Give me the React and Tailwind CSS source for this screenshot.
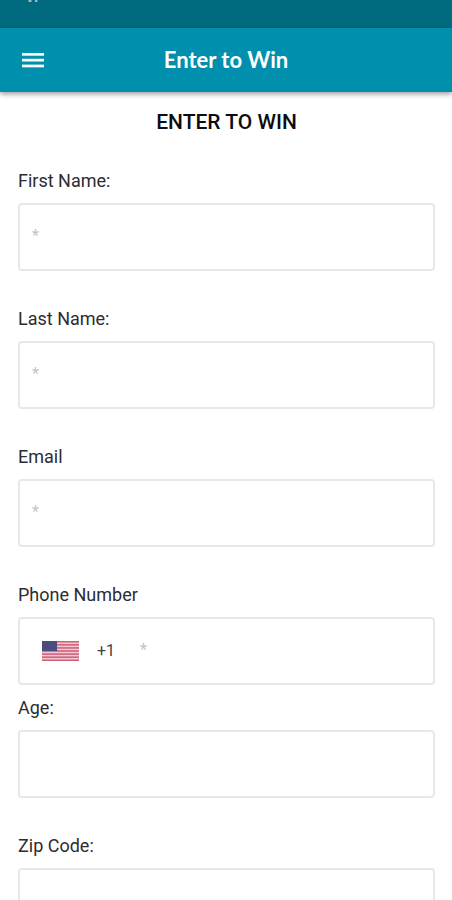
import { useState } from "react";

const BOX = "h-[68px] rounded border-2 border-[#e8e8e8] bg-white";
const INPUT_TEXT = "pb-1 text-base text-[#222] placeholder:text-[#c4c4c4] outline-none";
const LABEL = "text-lg/6";

function StatusMarks() {
  return (
    <svg viewBox="0 0 12 3" className="ml-7 h-[3px] w-3" fill="#a9b4b8" aria-hidden="true">
      <rect x="0.5" y="0" width="3" height="2" />
      <rect x="7" y="0" width="2.4" height="2" />
    </svg>
  );
}

function MenuIcon() {
  return (
    <svg viewBox="0 0 22 16" className="h-4 w-[22px]" fill="white" aria-hidden="true">
      <rect x="0" y="1" width="22" height="2.7" />
      <rect x="0" y="6.8" width="22" height="2.7" />
      <rect x="0" y="12.6" width="22" height="2.7" />
    </svg>
  );
}

function UsFlag() {
  return (
    <svg viewBox="0 0 37 20" className="h-5 w-[37px]" aria-hidden="true">
      <rect width="37" height="20" fill="#f1c9cf" />
      {[0, 1, 2, 3, 4, 5, 6].map((i) => (
        <rect key={i} x="0" y={i * 3.08} width="37" height="1.54" fill="#d0607a" />
      ))}
      <rect width="15" height="10" fill="#4b4b82" />
    </svg>
  );
}

function Field({ id, label, placeholder, type = "text" }) {
  const [value, setValue] = useState("");

  return (
    <div className="flex flex-col gap-[10px]">
      <label htmlFor={id} className={LABEL}>
        {label}
      </label>
      <input
        id={id}
        type={type}
        value={value}
        placeholder={placeholder}
        onChange={(e) => setValue(e.target.value)}
        className={`${BOX} ${INPUT_TEXT} w-full px-3`}
      />
    </div>
  );
}

function PhoneField() {
  const [value, setValue] = useState("");

  return (
    <div className="flex flex-col gap-[10px]">
      <label htmlFor="phone" className={LABEL}>
        Phone Number
      </label>
      <div className={`${BOX} flex items-center pl-[22px] pr-3`}>
        <button type="button" aria-label="Country code" className="flex items-center gap-[18px]">
          <UsFlag />
          <span className="text-base text-[#444]">+1</span>
        </button>
        <input
          id="phone"
          type="tel"
          value={value}
          placeholder="*"
          onChange={(e) => setValue(e.target.value)}
          className={`${INPUT_TEXT} ml-[25px] h-full min-w-0 flex-1`}
        />
      </div>
    </div>
  );
}

export default function App() {
  return (
    <div className="h-screen overflow-hidden bg-white font-['Roboto',sans-serif] text-[#2c2c32]">
      {/* Status bar */}
      <div className="h-7 bg-[#006b7e]">
        <StatusMarks />
      </div>

      <header className="grid h-16 grid-cols-[1fr_auto_1fr] items-center bg-[#008fac] px-[22px] shadow-[0_2px_5px_rgba(0,0,0,0.4)]">
        <button type="button" aria-label="Menu" className="justify-self-start">
          <MenuIcon />
        </button>
        <span className="font-['Lato',sans-serif] text-[22px]/8 font-bold text-white">
          Enter to Win
        </span>
      </header>

      <main className="pt-[18px] pr-[17px] pl-[18px]">
        <h1 className="text-center text-[21px]/6 font-medium text-[#0c0c12]">ENTER TO WIN</h1>
        <form className="mt-[35px] flex flex-col gap-9">
          <Field id="first-name" label="First Name:" placeholder="*" />
          <Field id="last-name" label="Last Name:" placeholder="*" />
          <Field id="email" label="Email" placeholder="*" type="email" />
          <div className="flex flex-col gap-[11px]">
            <PhoneField />
            <Field id="age" label="Age:" />
          </div>
          <Field id="zip" label="Zip Code:" />
        </form>
      </main>
    </div>
  );
}
